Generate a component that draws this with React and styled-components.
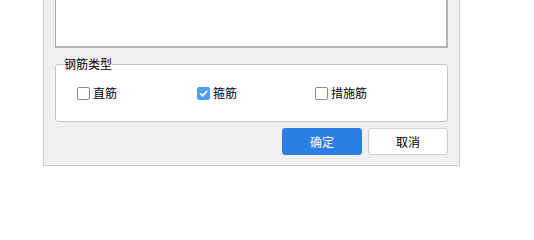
import { useState } from "react";
import styled, { createGlobalStyle } from "styled-components";

const GlobalStyle = createGlobalStyle`
  html, body {
    margin: 0;
    padding: 0;
    background: #fff;
  }
  body {
    font-family: "Microsoft YaHei", "Noto Sans CJK SC", "Noto Sans", sans-serif;
    font-size: 12px;
    color: #000;
  }
`;

const Dialog = styled.div`
  margin-left: 43px;
  width: 417px;
  box-sizing: border-box;
  background: #f0f0f0;
  border: 1px solid #c6cdd7;
  border-top: none;
  padding: 0 11px 10px;
`;

const TextBox = styled.div`
  height: 48px;
  box-sizing: border-box;
  background: #fff;
  border: 1px solid #a9a9a9;
  border-top: none;
  border-bottom-width: 2px;
  border-right-width: 2px;
  border-right-color: #b4b4b4;
  border-bottom-color: #b4b4b4;
`;

const Group = styled.fieldset`
  margin: 9px 0 0;
  padding: 0 0 6px 21px;
  height: 65px;
  box-sizing: border-box;
  border: 1px solid #c3c3c3;
  border-radius: 3px;
  background: #fff;
  display: grid;
  grid-template-columns: 120px 118px auto;
  align-items: center;
`;

const Legend = styled.legend`
  margin-left: -13px;
  padding: 0;
  font-size: 12px;
  line-height: 14px;
  color: #000;
  background: linear-gradient(#f0f0f0 50%, #fff 50%);
`;

const Item = styled.label`
  display: flex;
  align-items: center;
  gap: 3px;
  cursor: pointer;
  line-height: 14px;
`;

const Box = styled.span`
  width: 13px;
  height: 13px;
  box-sizing: border-box;
  border-radius: 2px;
  display: inline-flex;
  align-items: center;
  justify-content: center;
  background: ${(p) => (p.$checked ? "#4d9ef4" : "#fff")};
  border: 1px solid ${(p) => (p.$checked ? "#4d9ef4" : "#8c8c8c")};
  svg {
    width: 9px;
    height: 9px;
  }
`;

const Footer = styled.div`
  display: flex;
  justify-content: flex-end;
  gap: 6px;
  margin-top: 6px;
`;

const Button = styled.button`
  width: 80px;
  height: 27px;
  box-sizing: border-box;
  border-radius: 3px;
  font-family: inherit;
  font-size: 12px;
  cursor: pointer;
  border: 1px solid ${(p) => (p.$primary ? "#2c7fe2" : "#cfcfcf")};
  background: ${(p) => (p.$primary ? "#2c7fe2" : "#fff")};
  color: ${(p) => (p.$primary ? "#fff" : "#000")};
`;

function Check({ label, checked, onToggle }) {
  return (
    <Item onClick={onToggle}>
      <Box $checked={checked}>
        {checked && (
          <svg viewBox="0 0 10 10">
            <path d="M1.5 5.2 L4 7.6 L8.6 2.6" fill="none" stroke="#fff" strokeWidth="1.8" strokeLinecap="round" strokeLinejoin="round" />
          </svg>
        )}
      </Box>
      {label}
    </Item>
  );
}

export default function App() {
  const [types, setTypes] = useState({ straight: false, stirrup: true, measure: false });
  const toggle = (k) => setTypes((t) => ({ ...t, [k]: !t[k] }));

  return (
    <>
      <GlobalStyle />
      <Dialog>
        <TextBox />
        <Group>
          <Legend>钢筋类型</Legend>
          <Check label="直筋" checked={types.straight} onToggle={() => toggle("straight")} />
          <Check label="箍筋" checked={types.stirrup} onToggle={() => toggle("stirrup")} />
          <Check label="措施筋" checked={types.measure} onToggle={() => toggle("measure")} />
        </Group>
        <Footer>
          <Button $primary>确定</Button>
          <Button>取消</Button>
        </Footer>
      </Dialog>
    </>
  );
}
